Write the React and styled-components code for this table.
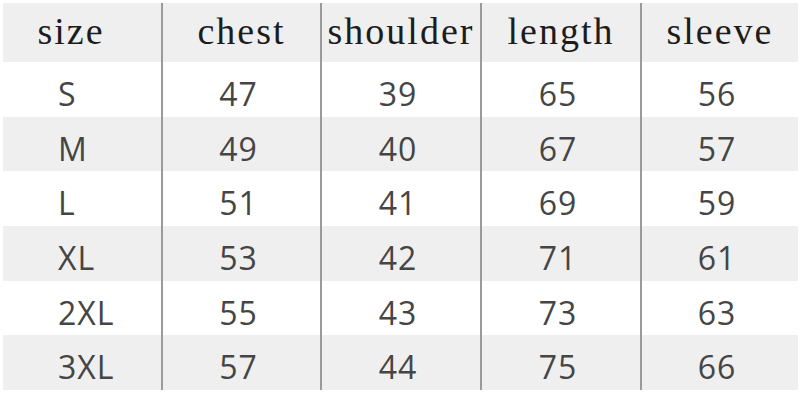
import React from "react";
import styled, { createGlobalStyle } from "styled-components";

const GlobalStyle = createGlobalStyle`
  html, body {
    margin: 0;
    padding: 0;
    background: #ffffff;
  }
  #root {
    width: 800px;
    height: 400px;
  }
`;

const Page = styled.div`
  width: 800px;
  height: 400px;
  padding: 3px 2px 0 3px;
  box-sizing: border-box;
  background: #ffffff;
`;

const Table = styled.div`
  display: grid;
  grid-template-rows: 59px repeat(6, 1fr);
  height: 387px;
  width: 795px;
`;

const Row = styled.div`
  display: grid;
  grid-template-columns: 158px 159px 160px 160px 1fr;
  background: ${(p) => (p.$shaded ? "#efefef" : "#ffffff")};
`;

const Cell = styled.div`
  box-sizing: border-box;
  border-left: ${(p) => (p.$first ? "none" : "2px solid #9a9a9a")};
  line-height: 1;
  white-space: nowrap;
`;

const HeadCell = styled(Cell)`
  font-family: "Liberation Serif", "Times New Roman", serif;
  font-size: 38px;
  letter-spacing: 2px;
  color: #1c1c1c;
  text-align: center;
  padding-top: 9px;
  padding-right: ${(p) => (p.$first ? "22px" : "0")};
`;

const DataCell = styled(Cell)`
  font-family: "Open Sans", "Noto Sans", sans-serif;
  font-size: 32px;
  letter-spacing: 1px;
  color: #454545;
  padding-top: 16px;
  text-align: ${(p) => (p.$first ? "left" : "center")};
  padding-left: ${(p) => (p.$first ? "55px" : "0")};
  padding-right: ${(p) => (p.$first ? "0" : "6px")};
`;

const headers = ["size", "chest", "shoulder", "length", "sleeve"];

const rows = [
  ["S", "47", "39", "65", "56"],
  ["M", "49", "40", "67", "57"],
  ["L", "51", "41", "69", "59"],
  ["XL", "53", "42", "71", "61"],
  ["2XL", "55", "43", "73", "63"],
  ["3XL", "57", "44", "75", "66"],
];

export default function App() {
  return (
    <>
      <GlobalStyle />
      <Page>
        <Table>
          <Row $shaded>
            {headers.map((h, i) => (
              <HeadCell key={h} $first={i === 0}>
                {h}
              </HeadCell>
            ))}
          </Row>
          {rows.map((r, ri) => (
            <Row key={r[0]} $shaded={ri % 2 === 1}>
              {r.map((v, ci) => (
                <DataCell key={ci} $first={ci === 0}>
                  {v}
                </DataCell>
              ))}
            </Row>
          ))}
        </Table>
      </Page>
    </>
  );
}
